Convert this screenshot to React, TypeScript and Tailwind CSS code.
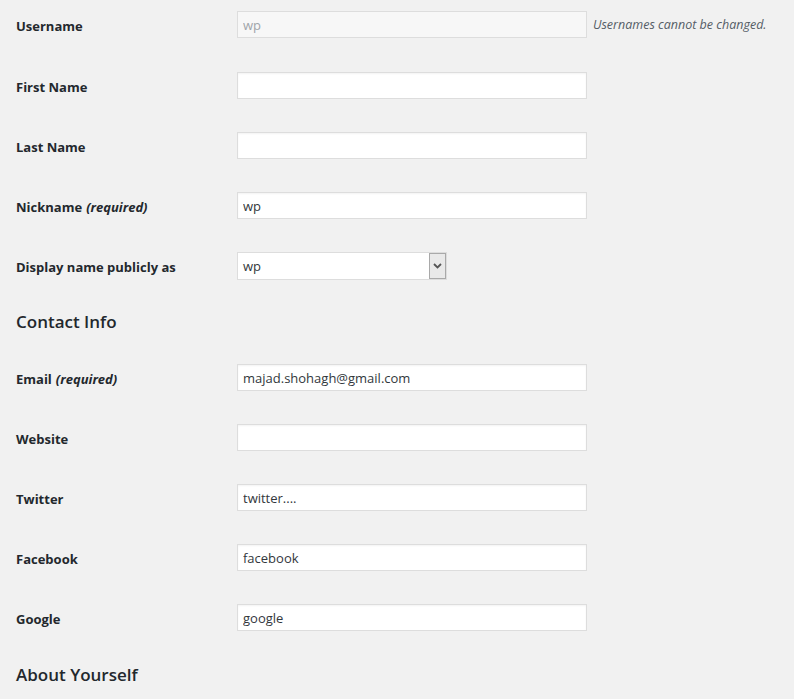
import React from "react";

const font = { fontFamily: '"Open Sans", "Noto Sans", sans-serif' };

function Row({
  label,
  required,
  children,
}: {
  label: string;
  required?: boolean;
  children: React.ReactNode;
}) {
  return (
    <div className="flex items-center h-[27px] mb-[33px]">
      <div className="w-[221px] shrink-0 text-[13px] font-bold text-[#23282d] pt-[4px]">
        {label}
        {required && <em className="ml-1">(required)</em>}
      </div>
      {children}
    </div>
  );
}

function TextInput({ value = "", disabled }: { value?: string; disabled?: boolean }) {
  return (
    <input
      type="text"
      readOnly
      value={value}
      disabled={disabled}
      className={`w-[350px] h-[27px] border border-[#dddddd] px-[5px] text-[13px] outline-none ${
        disabled ? "bg-[#f7f7f7] text-[#a0a5aa]" : "bg-white text-[#32373c] shadow-[inset_0_1px_2px_rgba(0,0,0,0.05)]"
      }`}
      style={font}
    />
  );
}

export default function App() {
  return (
    <div className="min-h-screen bg-[#f1f1f1] pl-4 pt-[11px]" style={font}>
      <div className="flex items-center h-[27px] mb-[34px]">
        <div className="w-[221px] shrink-0 text-[13px] font-bold text-[#23282d] pt-[4px]">Username</div>
        <TextInput value="wp" disabled />
        <span className="ml-[6px] text-[12.5px] italic text-[#555d66] pt-[2px]">Usernames cannot be changed.</span>
      </div>
      <Row label="First Name">
        <TextInput />
      </Row>
      <Row label="Last Name">
        <TextInput />
      </Row>
      <Row label="Nickname" required>
        <TextInput value="wp" />
      </Row>

      <div className="flex items-center h-[28px]">
        <div className="w-[221px] shrink-0 text-[13px] font-bold text-[#23282d] pt-[4px]">
          Display name publicly as
        </div>
        <div className="flex w-[210px] h-[28px] border border-[#dddddd] bg-white">
          <span className="flex-1 px-[5px] text-[13px] leading-[26px] text-[#32373c]">wp</span>
          <span className="w-[17px] h-full border border-[#a9a9a9] bg-[#e9e9e9] flex items-center justify-center">
            <svg width="9" height="6" viewBox="0 0 9 6">
              <path d="M1 1 L4.5 4.5 L8 1" fill="none" stroke="#555" strokeWidth="1.8" />
            </svg>
          </span>
        </div>
      </div>

      <h2 className="text-[17px] font-semibold text-[#23282d] mt-[30px] mb-[30px] leading-[24px]">
        Contact Info
      </h2>

      <Row label="Email" required>
        <TextInput value="majad.shohagh@gmail.com" />
      </Row>
      <Row label="Website">
        <TextInput />
      </Row>
      <div className="mt-[1px]">
        <Row label="Twitter">
          <TextInput value="twitter...." />
        </Row>
      </div>
      <Row label="Facebook">
        <TextInput value="facebook" />
      </Row>
      <Row label="Google">
        <TextInput value="google" />
      </Row>

      <h2 className="text-[17px] font-semibold text-[#23282d] -mt-[1px] leading-[24px]">About Yourself</h2>
    </div>
  );
}
